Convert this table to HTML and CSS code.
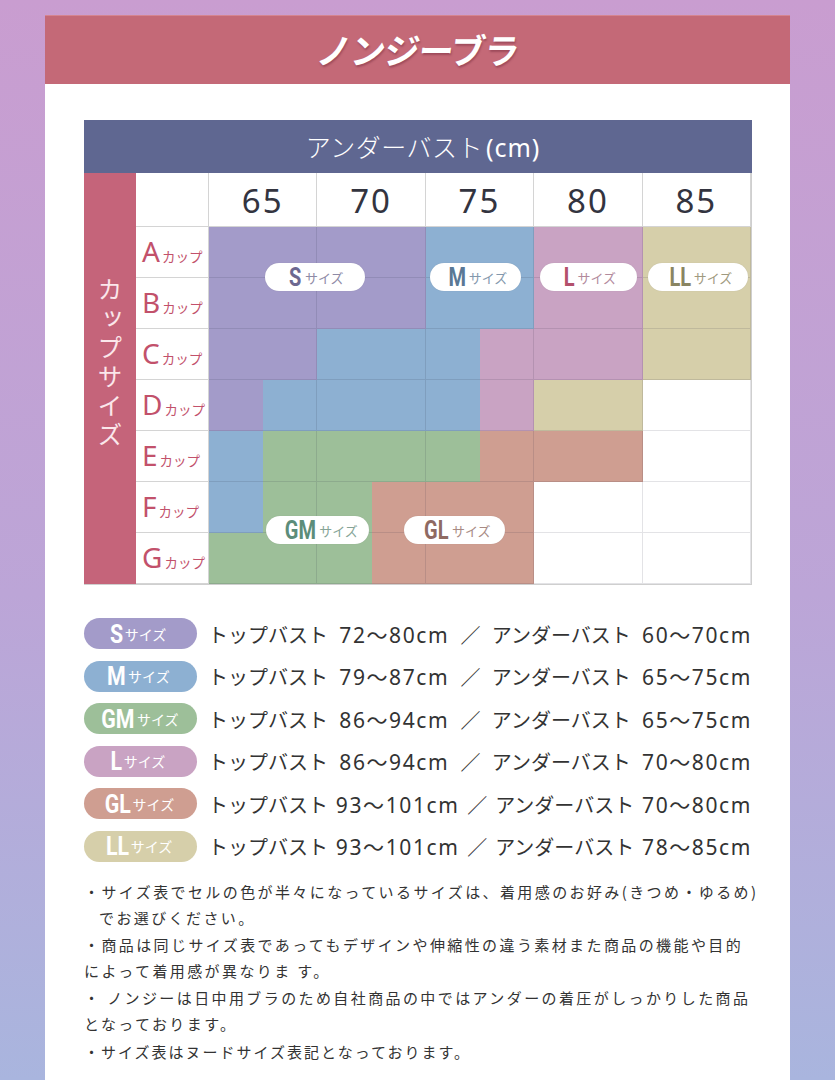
FILE: index.html
```html
<!DOCTYPE html>
<html lang="ja">
<head>
<meta charset="utf-8">
<title>ノンジーブラ</title>
<link rel="stylesheet" href="styles.css">
</head>
<body>
<div class="panel">
  <h1 class="title"><span>ノンジーブラ</span></h1>
  <div class="content">
    <div class="chart">
      <div class="chart-head">アンダーバスト<span class="unit">(cm)</span></div>
      <div class="grid">
        <div class="cup-side"><span>カップサイズ</span></div>
        <div class="corner"></div>
        <div class="col-h">65</div>
        <div class="col-h">70</div>
        <div class="col-h">75</div>
        <div class="col-h">80</div>
        <div class="col-h">85</div>

        <div class="cup"><b>A</b><small>カップ</small></div>
        <div class="cell"><i class="s"></i></div>
        <div class="cell"><i class="s"></i></div>
        <div class="cell"><i class="m"></i></div>
        <div class="cell"><i class="l"></i></div>
        <div class="cell"><i class="ll"></i></div>

        <div class="cup"><b>B</b><small>カップ</small></div>
        <div class="cell"><i class="s"></i></div>
        <div class="cell"><i class="s"></i></div>
        <div class="cell"><i class="m"></i></div>
        <div class="cell"><i class="l"></i></div>
        <div class="cell"><i class="ll"></i></div>

        <div class="cup"><b>C</b><small>カップ</small></div>
        <div class="cell"><i class="s"></i></div>
        <div class="cell"><i class="m"></i></div>
        <div class="cell"><i class="m"></i><i class="l"></i></div>
        <div class="cell"><i class="l"></i></div>
        <div class="cell"><i class="ll"></i></div>

        <div class="cup"><b>D</b><small>カップ</small></div>
        <div class="cell"><i class="s"></i><i class="m"></i></div>
        <div class="cell"><i class="m"></i></div>
        <div class="cell"><i class="m"></i><i class="l"></i></div>
        <div class="cell"><i class="ll"></i></div>
        <div class="cell"><i class="w"></i></div>

        <div class="cup"><b>E</b><small>カップ</small></div>
        <div class="cell"><i class="m"></i><i class="gm"></i></div>
        <div class="cell"><i class="gm"></i></div>
        <div class="cell"><i class="gm"></i><i class="gl"></i></div>
        <div class="cell"><i class="gl"></i></div>
        <div class="cell"><i class="w"></i></div>

        <div class="cup"><b>F</b><small>カップ</small></div>
        <div class="cell"><i class="m"></i><i class="gm"></i></div>
        <div class="cell"><i class="gm"></i><i class="gl"></i></div>
        <div class="cell"><i class="gl"></i></div>
        <div class="cell"><i class="w"></i></div>
        <div class="cell"><i class="w"></i></div>

        <div class="cup"><b>G</b><small>カップ</small></div>
        <div class="cell"><i class="gm"></i></div>
        <div class="cell"><i class="gm"></i><i class="gl"></i></div>
        <div class="cell"><i class="gl"></i></div>
        <div class="cell"><i class="w"></i></div>
        <div class="cell"><i class="w"></i></div>

        <span class="tag tag-s"><b>S</b>サイズ</span>
        <span class="tag tag-m"><b>M</b>サイズ</span>
        <span class="tag tag-l"><b>L</b>サイズ</span>
        <span class="tag tag-ll"><b>LL</b>サイズ</span>
        <span class="tag tag-gm"><b>GM</b>サイズ</span>
        <span class="tag tag-gl"><b>GL</b>サイズ</span>
      </div>
    </div>

    <ul class="legend">
      <li><span class="pill s"><b>S</b>サイズ</span><span class="txt"><span>トップバスト</span><span class="n">72〜80cm</span><span>／</span><span>アンダーバスト</span><span class="n">60〜70cm</span></span></li>
      <li><span class="pill m"><b>M</b>サイズ</span><span class="txt"><span>トップバスト</span><span class="n">79〜87cm</span><span>／</span><span>アンダーバスト</span><span class="n">65〜75cm</span></span></li>
      <li><span class="pill gm"><b>GM</b>サイズ</span><span class="txt"><span>トップバスト</span><span class="n">86〜94cm</span><span>／</span><span>アンダーバスト</span><span class="n">65〜75cm</span></span></li>
      <li><span class="pill l"><b>L</b>サイズ</span><span class="txt"><span>トップバスト</span><span class="n">86〜94cm</span><span>／</span><span>アンダーバスト</span><span class="n">70〜80cm</span></span></li>
      <li><span class="pill gl"><b>GL</b>サイズ</span><span class="txt"><span>トップバスト</span><span class="n">93〜101cm</span><span>／</span><span>アンダーバスト</span><span class="n">70〜80cm</span></span></li>
      <li><span class="pill ll"><b>LL</b>サイズ</span><span class="txt"><span>トップバスト</span><span class="n">93〜101cm</span><span>／</span><span>アンダーバスト</span><span class="n">78〜85cm</span></span></li>
    </ul>

    <div class="notes">
      <p>・サイズ表でセルの色が半々になっているサイズは、着用感のお好み(きつめ・ゆるめ)<br><span class="ind">でお選びください。</span></p>
      <p>・商品は同じサイズ表であってもデザインや伸縮性の違う素材また商品の機能や目的<br>によって着用感が異なりま す。</p>
      <p>・ ノンジーは日中用ブラのため自社商品の中ではアンダーの着圧がしっかりした商品<br>となっております。</p>
      <p class="last">・サイズ表はヌードサイズ表記となっております。</p>
    </div>
  </div>
</div>
</body>
</html>
```

FILE: styles.css
```css
* { box-sizing: border-box; margin: 0; padding: 0; }

body {
  font-family: "Noto Sans CJK JP", "Noto Sans", sans-serif;
  background: linear-gradient(180deg, #c99dd0 0%, #bca5d7 55%, #a9b5de 100%);
  height: 1080px;
  overflow: hidden;
}

.panel {
  margin: 15px 45px 0;
  background: #fff;
  height: 1065px;
}

.title {
  height: 69px;
  background: #c46977;
  border-top: 1px solid #d58590;
  color: #fff;
  font-size: 35px;
  font-weight: 700;
  text-align: center;
  line-height: 66px;
  letter-spacing: -1px;
  text-shadow: 1px 2px 2px rgba(90, 20, 40, 0.35);
}

.title span {
  display: inline-block;
  transform: skewX(-7deg);
}

.content {
  padding: 36px 38px 0 39px;
}

/* ---------- chart ---------- */
.chart-head {
  height: 53px;
  background: #5f6791;
  color: #fff;
  font-size: 25px;
  font-weight: 300;
  text-align: center;
  line-height: 53px;
  letter-spacing: 0.5px;
  padding-left: 10px;
}

.chart-head .unit {
  font-family: "Noto Sans", sans-serif;
  font-weight: 400;
  margin-left: 3px;
  letter-spacing: 1px;
}

.grid {
  position: relative;
  display: grid;
  grid-template-columns: 52px 73px repeat(5, 1fr);
  grid-template-rows: 54px repeat(7, 51px);
  border-right: 1px solid #cfcfcf;
  border-bottom: 1px solid #cfcfcf;
}

.cup-side {
  grid-row: 1 / -1;
  background: #c5647a;
  display: flex;
  align-items: center;
  justify-content: center;
  padding-bottom: 30px;
}

.cup-side span {
  writing-mode: vertical-rl;
  color: #fbe7eb;
  font-size: 25px;
  letter-spacing: 4px;
}

.corner,
.col-h,
.cup {
  background: #fff;
  border-right: 1px solid #d4d4d4;
  border-bottom: 1px solid #d4d4d4;
}

.col-h {
  font-family: "Noto Sans", sans-serif;
  font-size: 33px;
  color: #33343f;
  display: flex;
  align-items: center;
  justify-content: center;
  letter-spacing: 2px;
  padding-top: 2px;
}

.cup {
  display: flex;
  align-items: baseline;
  padding: 7px 0 0 6px;
  color: #c2516b;
}

.cup b {
  font-family: "Noto Sans", sans-serif;
  font-weight: 400;
  font-size: 28px;
  line-height: 34px;
}

.cup small {
  font-size: 13.5px;
  margin-left: 2px;
}

.cell {
  position: relative;
  display: flex;
}

.cell::after {
  content: "";
  position: absolute;
  inset: 0;
  border-right: 1px solid rgba(40, 40, 60, 0.13);
  border-bottom: 1px solid rgba(40, 40, 60, 0.13);
  pointer-events: none;
}

.cell i {
  flex: 1;
}

.s { background: #a39bc9; }
.m { background: #8db0d2; }
.gm { background: #9dbf99; }
.l { background: #c9a3c3; }
.gl { background: #cf9e91; }
.ll { background: #d6cfaa; }
.w { background: #fff; }

/* tags over the chart */
.tag {
  position: absolute;
  height: 28px;
  border-radius: 14px;
  background: #fff;
  display: flex;
  align-items: center;
  justify-content: center;
  font-size: 13px;
  color: #8a8a9a;
  box-shadow: 0 0 1px rgba(0, 0, 0, 0.15);
}

.tag b {
  display: inline-block;
  font-family: "Roboto", "Liberation Sans", sans-serif;
  font-weight: 700;
  font-size: 25px;
  line-height: 1;
  transform: scaleX(0.8);
  transform-origin: right center;
  margin-right: 3px;
}

.tag-s { left: 181px; top: 90px; width: 100px; color: #8e8aa6; }
.tag-s b { color: #6d6890; }
.tag-m { left: 346px; top: 90px; width: 91px; color: #8398ad; }
.tag-m b { color: #5a7895; }
.tag-l { left: 456px; top: 90px; width: 97px; color: #b28a9c; }
.tag-l b { color: #b3506c; }
.tag-ll { left: 564px; top: 90px; width: 100px; color: #9f9a80; }
.tag-ll b { color: #8a8562; }
.tag-gm { left: 182px; top: 343px; width: 103px; color: #86a497; }
.tag-gm b { color: #5c8d7a; }
.tag-gl { left: 320px; top: 343px; width: 101px; color: #a88a84; }
.tag-gl b { color: #8f6a62; }

/* ---------- legend ---------- */
.legend {
  list-style: none;
  margin-top: 33px;
  display: flex;
  flex-direction: column;
  gap: 11.5px;
}

.legend li {
  display: flex;
  align-items: center;
  height: 31px;
}

.pill {
  flex: none;
  width: 113px;
  height: 31px;
  border-radius: 16px;
  color: #fff;
  display: flex;
  align-items: center;
  justify-content: center;
  font-size: 14px;
  padding-right: 8px;
}

.pill b {
  display: inline-block;
  font-family: "Roboto", "Liberation Sans", sans-serif;
  font-weight: 700;
  font-size: 26px;
  line-height: 1;
  transform: scaleX(0.82);
  transform-origin: right center;
  margin-right: 2px;
}

.txt {
  margin-left: 11px;
  width: 544px;
  display: flex;
  justify-content: space-between;
  align-items: baseline;
  font-size: 20px;
  color: #333;
  white-space: nowrap;
}

.txt .n {
  font-family: "Noto Sans", "Noto Sans CJK JP", sans-serif;
  font-size: 21px;
  letter-spacing: 1.6px;
}

/* ---------- notes ---------- */
.notes {
  margin-top: 17px;
  font-size: 15px;
  color: #333;
  letter-spacing: 2.4px;
  line-height: 26px;
  white-space: nowrap;
}

.notes p + p {
  margin-top: 1px;
}

.notes .ind {
  padding-left: 15px;
}

.notes .last {
  margin-top: 2px;
  letter-spacing: 2px;
}
```
